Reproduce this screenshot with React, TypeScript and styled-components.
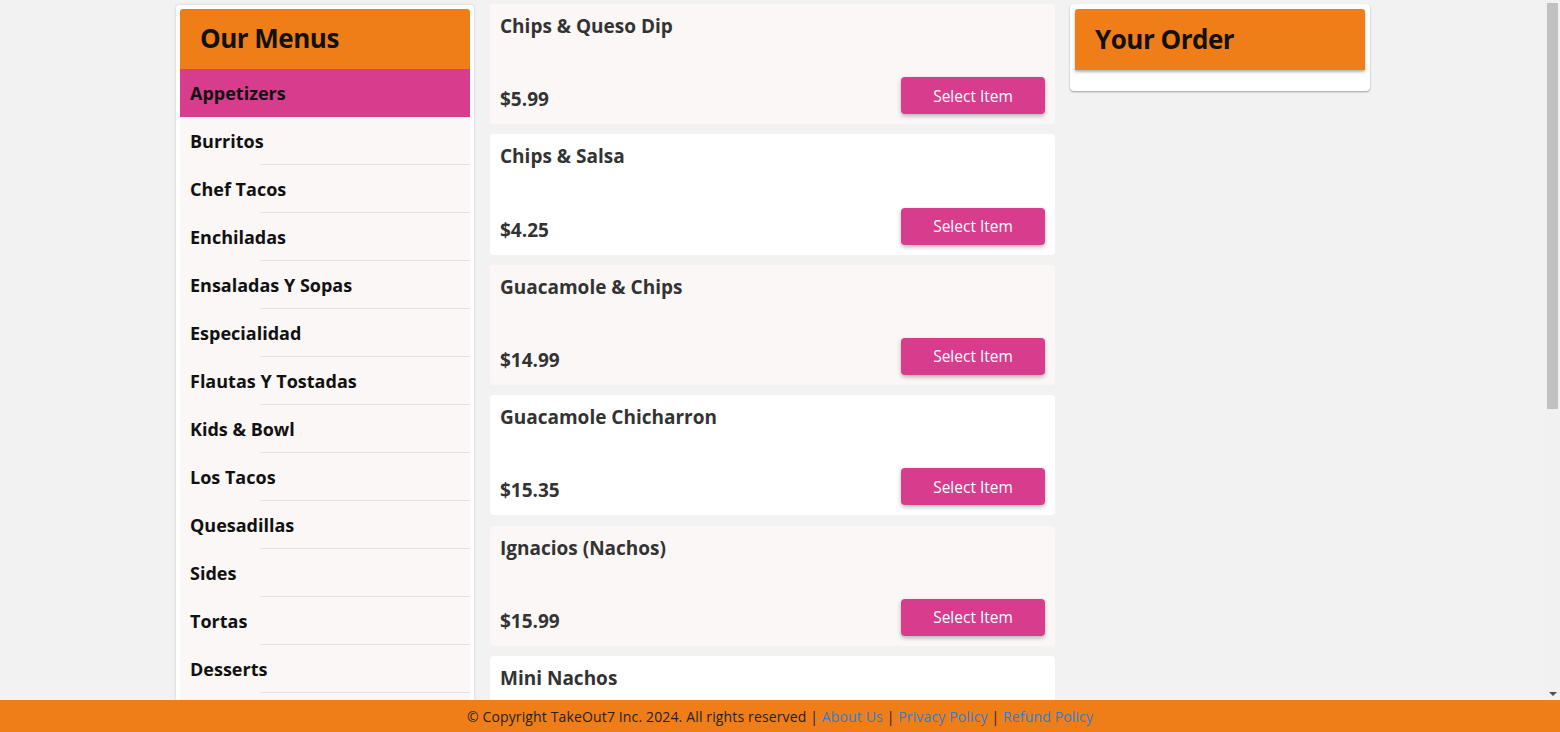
import React from "react";
import styled, { createGlobalStyle } from "styled-components";

const ORANGE = "#F07E18";
const PINK = "#D73C8D";

const Global = createGlobalStyle`
  html, body { margin: 0; padding: 0; height: 100%; }
  body { background: #F2F2F2; font-family: "Open Sans", "Liberation Sans", sans-serif; }
  * { box-sizing: border-box; }
`;

const Shell = styled.div`
  position: relative;
  display: flex;
  flex-direction: column;
  height: 100vh;
`;

const Scroller = styled.main`
  flex: 1;
  overflow-y: auto;
  scrollbar-width: none;
  padding-right: 15px;
  background: #F2F2F2;
`;

const ScrollTrack = styled.div`
  position: absolute;
  top: 0;
  right: 0;
  width: 15px;
  bottom: 32px;
  background: #f1f1f1;
`;

const ScrollThumb = styled.div`
  position: absolute;
  top: 3px;
  left: 2px;
  right: 2px;
  height: 406px;
  background: #c1c1c1;
`;

const ScrollArrow = styled.div`
  position: absolute;
  left: 3.5px;
  bottom: 4px;
  width: 0;
  height: 0;
  border-left: 4px solid transparent;
  border-right: 4px solid transparent;
  border-top: 4px solid #505050;
`;

const Container = styled.div`
  width: 1195px;
  margin: 0 auto;
  padding-top: 4px;
  display: flex;
  align-items: flex-start;
`;

const SideCard = styled.aside`
  width: 300px;
  background: #fff;
  border: 1px solid #e3e3e3;
  border-radius: 4px;
  padding: 4px;
  box-shadow: 0 0 3px rgba(0, 0, 0, 0.06);
`;

const PanelHeader = styled.div<{ $shadow?: boolean }>`
  height: ${(p) => (p.$shadow ? 61 : 60)}px;
  background: ${ORANGE};
  border-radius: 3px 3px 0 0;
  display: flex;
  align-items: center;
  padding: 0 20px 2px;
  box-shadow: ${(p) => (p.$shadow ? "0 2px 3px rgba(0,0,0,0.3)" : "none")};
`;

const PanelTitle = styled.h2`
  margin: 0;
  font-size: 26px;
  letter-spacing: -0.5px;
  font-weight: 700;
  color: #111;
  line-height: 1;
`;

const CategoryList = styled.ul`
  list-style: none;
  margin: 0;
  padding: 0;
`;

const Category = styled.li<{ $active?: boolean }>`
  position: relative;
  height: 48px;
  display: flex;
  align-items: center;
  padding: 0 10px;
  font-size: 18px;
  font-weight: 700;
  color: #111;
  background: ${(p) => (p.$active ? PINK : "#FAF7F6")};
  cursor: pointer;
  &::after {
    content: "";
    position: absolute;
    left: 80px;
    right: 0;
    bottom: 0;
    height: 1px;
    background: ${(p) => (p.$active ? "transparent" : "#e2e0df")};
  }
`;

const MenuColumn = styled.section`
  width: 565px;
  margin-left: 15px;
  display: flex;
  flex-direction: column;
  gap: 10.2px;
  padding-bottom: 10px;
`;

const ItemCard = styled.div<{ $alt?: boolean }>`
  height: 120.2px;
  background: ${(p) => (p.$alt ? "#ffffff" : "#FAF7F6")};
  border-radius: 4px;
  padding: 10px;
  display: flex;
  flex-direction: column;
  justify-content: space-between;
`;

const ItemName = styled.h3`
  margin: 0;
  font-size: 19px;
  line-height: 24px;
  font-weight: 700;
  color: #333;
`;

const ItemFooter = styled.div`
  display: flex;
  align-items: flex-end;
  justify-content: space-between;
`;

const Price = styled.span`
  font-size: 19px;
  line-height: 24px;
  font-weight: 700;
  color: #333;
  padding-bottom: 3px;
`;

const SelectButton = styled.button`
  width: 144px;
  height: 37px;
  border: none;
  border-radius: 4px;
  background: ${PINK};
  color: #fff;
  font-family: inherit;
  font-size: 15.5px;
  box-shadow: 0 2px 4px rgba(0, 0, 0, 0.28);
  cursor: pointer;
`;

const OrderCard = styled.aside`
  width: 300px;
  margin-left: 15px;
  background: #fff;
  border-radius: 4px;
  padding: 5px 5px 21px;
  box-shadow: 0 1px 2px rgba(0, 0, 0, 0.35);
`;

const Footer = styled.footer`
  height: 32px;
  background: ${ORANGE};
  display: flex;
  align-items: center;
  justify-content: center;
  font-size: 14px;
  letter-spacing: 0.14px;
  color: #222;
  white-space: pre;
`;

const FooterLink = styled.a`
  color: #2f7fd0;
  text-decoration: none;
`;

const categories = [
  "Appetizers",
  "Burritos",
  "Chef Tacos",
  "Enchiladas",
  "Ensaladas Y Sopas",
  "Especialidad",
  "Flautas Y Tostadas",
  "Kids & Bowl",
  "Los Tacos",
  "Quesadillas",
  "Sides",
  "Tortas",
  "Desserts",
  "Drinks",
];

const items = [
  { name: "Chips & Queso Dip", price: "$5.99" },
  { name: "Chips & Salsa", price: "$4.25" },
  { name: "Guacamole & Chips", price: "$14.99" },
  { name: "Guacamole Chicharron", price: "$15.35" },
  { name: "Ignacios (Nachos)", price: "$15.99" },
  { name: "Mini Nachos", price: "$9.99" },
  { name: "Nachos Supreme", price: "$16.99" },
  { name: "Queso Fundido", price: "$10.99" },
  { name: "Elote", price: "$6.50" },
];

export default function App() {
  return (
    <Shell>
      <Global />
      <Scroller>
        <Container>
          <SideCard>
            <PanelHeader>
              <PanelTitle>Our Menus</PanelTitle>
            </PanelHeader>
            <CategoryList>
              {categories.map((c, i) => (
                <Category key={c} $active={i === 0}>
                  {c}
                </Category>
              ))}
            </CategoryList>
          </SideCard>
          <MenuColumn>
            {items.map((it, i) => (
              <ItemCard key={it.name} $alt={i % 2 === 1}>
                <ItemName>{it.name}</ItemName>
                <ItemFooter>
                  <Price>{it.price}</Price>
                  <SelectButton>Select Item</SelectButton>
                </ItemFooter>
              </ItemCard>
            ))}
          </MenuColumn>
          <OrderCard>
            <PanelHeader $shadow>
              <PanelTitle>Your Order</PanelTitle>
            </PanelHeader>
          </OrderCard>
        </Container>
      </Scroller>
      <ScrollTrack aria-hidden>
        <ScrollThumb />
        <ScrollArrow />
      </ScrollTrack>
      <Footer>
        {"© Copyright TakeOut7 Inc. 2024. All rights reserved | "}
        <FooterLink href="#">About Us</FooterLink>
        {" | "}
        <FooterLink href="#">Privacy Policy</FooterLink>
        {" | "}
        <FooterLink href="#">Refund Policy</FooterLink>
      </Footer>
    </Shell>
  );
}
